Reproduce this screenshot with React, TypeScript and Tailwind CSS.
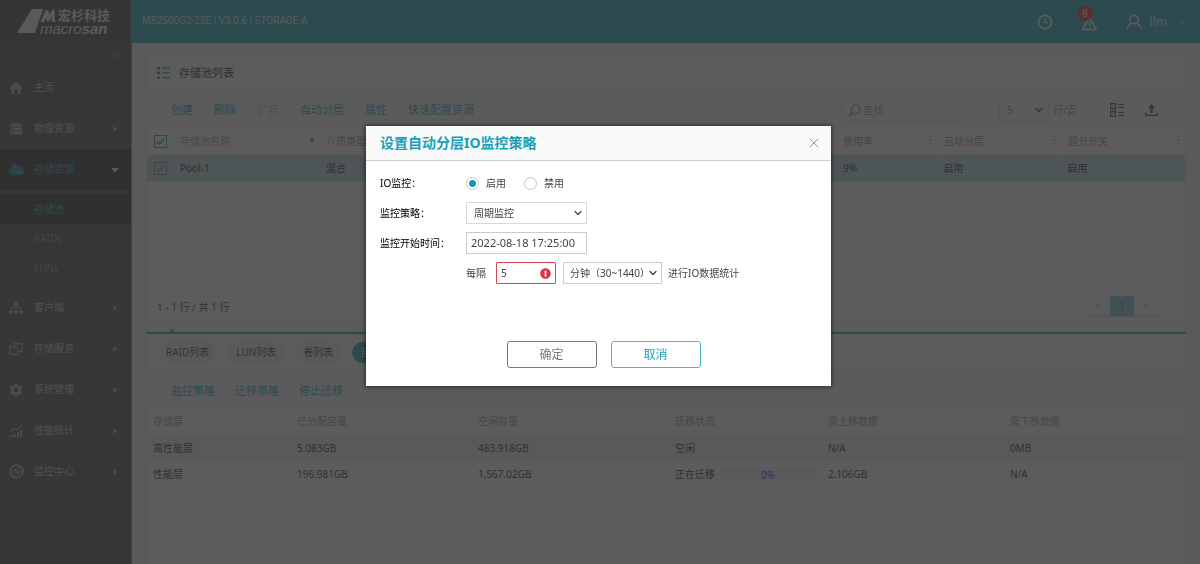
import type { ReactNode } from "react";
import {
  FaCog,
  FaSitemap,
  FaCloud,
  FaExclamationCircle,
} from "react-icons/fa";
import { ChevronDown, ChevronsLeft, X } from "lucide-react";

function Logo() {
  return (
    <div className="flex h-[43px] shrink-0 items-center bg-[#3a3c3e] pl-[17px]">
      <svg width="100" height="34" viewBox="0 -2 100 34" aria-label="宏杉科技 macrosan" role="img">
        <g fill="#f4f4f4">
          <polygon points="0,26 15,2 26,2 18,26" />
          <path d="M25 15 30 4.500 31 13 36 4.500 36.500 15" fill="none" stroke="#f4f4f4" strokeWidth="3.200" strokeLinejoin="round" />
          <text x="41" y="13" fontSize="13" fontWeight="700" fontFamily="Liberation Sans, Noto Sans CJK SC, sans-serif">
            宏杉科技
          </text>
          <text x="23" y="27" fontSize="15" fontStyle="italic" fontFamily="Liberation Sans, sans-serif">
            macro<tspan fontWeight="700">san</tspan>
          </text>
        </g>
      </svg>
    </div>
  );
}

const HomeIcon = (
  <svg width="14" height="14" viewBox="0 0 14 14" fill="currentColor">
    <path d="M7 1 0.8 6.4V8H2v5h3.4V9.4a1.6 1.6 0 0 1 3.2 0V13H12V8h1.2V6.4z" />
  </svg>
);
const StackIcon = (
  <svg width="14" height="14" viewBox="0 0 14 14" fill="currentColor">
    <path d="M1 1.5h12v3H1zM1 5.5h12v3H1zM1 9.5h12v3H1z" />
    <path d="M2 3h2M2 7h2M2 11h2" stroke="#43464a" />
  </svg>
);
const CopyIcon = (
  <svg width="14" height="14" viewBox="0 0 14 14" fill="none" stroke="currentColor" strokeWidth="1.3">
    <path d="M8 9.500h5V1.500H5.500V7.500M8 4.500v3M3.500 4.500H1v8h7.500v-1" />
  </svg>
);
const ChartIcon = (
  <svg width="14" height="14" viewBox="0 0 14 14" fill="currentColor">
    <path d="M1 11h2v2H1zM4.500 9.500h2V13h-2zM8 8h2v5H8zM11.200 6h2v7h-2z" />
    <path d="M1 7.500 5 4.500 8 6l5-4.500" fill="none" stroke="currentColor" strokeWidth="1.200" />
  </svg>
);
const PulseIcon = (
  <svg width="15" height="15" viewBox="0 0 15 15" fill="none" stroke="currentColor">
    <circle cx="7.500" cy="7.500" r="6.300" strokeWidth="1.800" />
    <path d="m3.500 8.500 2.500-3 3 4 2.500-3" strokeWidth="1.500" />
    <path d="m5 10.500 2.500-2.500M7.500 5.500 10 4.500" />
  </svg>
);

function NavItem({ icon, label, arrow = true, active = false }: { icon: ReactNode; label: string; arrow?: boolean; active?: boolean }) {
  return (
    <a
      href="#"
      className={
        active
          ? "flex h-[41px] items-center bg-[#23272b] pl-[9px] pr-3 text-[#14a0bb]"
          : "flex h-[41px] items-center pl-[9px] pr-3 text-[#c3c5c7]"
      }
    >
      <span className="flex w-[25px] items-center opacity-80">{icon}</span>
      <span className="flex-1">{label}</span>
      {arrow && (
        <svg width="8" height="8" viewBox="0 0 8 8" fill={active ? "#f4f4f4" : "#b0b2b4"}>
          {active ? <path d="M0 2h8L4 6.500z" /> : <path d="M2.500 1v6L6 4z" />}
        </svg>
      )}
    </a>
  );
}

function Sidebar() {
  return (
    <aside className="flex w-[132px] shrink-0 flex-col border-r border-[#7f8183] bg-[#43464a]">
      <Logo />
      <div className="flex h-6 items-center justify-end pr-[9px] text-[#85888b]">
        <button type="button" aria-label="收起菜单">
          <ChevronsLeft size={12} />
        </button>
      </div>
      <nav>
        <NavItem icon={HomeIcon} label="主页" arrow={false} />
        <NavItem icon={StackIcon} label="物理资源" />
        <NavItem icon={<FaCloud size={15} />} label="存储资源" active />
        <div className="bg-[#3d4043] py-1">
          <a href="#" className="flex h-[30px] items-center bg-[#23272b] pl-[34px] text-[#14a0bb]">存储池</a>
          <a href="#" className="flex h-[29px] items-center pl-[34px] text-[#8d9093]">RAIDs</a>
          <a href="#" className="flex h-[30px] items-center pl-[34px] text-[#8d9093]">LUNs</a>
        </div>
        <NavItem icon={<FaSitemap size={14} />} label="客户端" />
        <NavItem icon={CopyIcon} label="存储服务" />
        <NavItem icon={<FaCog size={14} />} label="系统管理" />
        <NavItem icon={ChartIcon} label="性能统计" />
        <NavItem icon={PulseIcon} label="监控中心" />
      </nav>
    </aside>
  );
}

function TopBar() {
  return (
    <header className="flex h-[43px] items-center bg-[#14a5bf] pl-[10px] pr-3 text-[#e4f4f7]">
      <div className="flex-1 pb-[3px] font-['Roboto','Noto_Sans_CJK_SC',sans-serif] text-[10px]">MS2500G2-25E | V3.0.6 | STORAGE-A</div>
      <button type="button" aria-label="时间" className="mr-[14px]">
        <svg width="16" height="16" viewBox="0 0 16 16" fill="none" stroke="currentColor">
          <circle cx="8" cy="8" r="6.500" strokeWidth="2" />
          <path d="M8 4.500V8.500h3" strokeWidth="1.500" />
        </svg>
      </button>
      <button type="button" aria-label="告警" className="relative mr-7 flex h-[43px] items-center border-l border-[#0f93ab] pl-[13px]">
        <svg width="17" height="15" viewBox="0 0 17 15" fill="none" stroke="currentColor" strokeWidth="1.800" className="mt-[3px]">
          <path d="M8.500 2 15.500 13.500h-14z" strokeLinejoin="round" />
          <path d="M8.500 6v4M8.500 11v1.200" strokeWidth="1.500" />
        </svg>
        <span className="absolute left-[10px] top-[6px] flex h-[15px] w-[15px] items-center justify-center rounded-full bg-[#f02020] text-[10px]">
          8
        </span>
      </button>
      <button type="button" className="flex items-center">
        <svg width="16" height="15" viewBox="0 0 16 15" fill="none" stroke="currentColor" strokeWidth="1.800" className="mr-2">
          <circle cx="8" cy="5.500" r="4.200" />
          <path d="M1.200 14.500C1.800 11.500 3.500 10 5.500 9M14.800 14.500C14.200 11.500 12.500 10 10.500 9" />
        </svg>
        <span className="mr-[11px] text-xs">llm</span>
        <ChevronDown size={10} strokeWidth={2} className="shrink-0" />
      </button>
    </header>
  );
}

function Sorter() {
  return (
    <svg width="5" height="10" viewBox="0 0 5 10" fill="#c4c4c4" className="shrink-0">
      <path d="M2.500 1 4.500 4h-4zM2.500 9 .5 6h4z" />
    </svg>
  );
}

function HeadCell({ label }: { label: string }) {
  return (
    <th className="pl-[7px] pr-1 font-normal">
      <div className="flex items-center justify-between">
        {label}
        <Sorter />
      </div>
    </th>
  );
}

function Tick({ label, tone }: { label: string; tone: "teal" | "grey" }) {
  return (
    <label className="grid w-[13px] place-items-center">
      <input
        type="checkbox"
        defaultChecked
        aria-label={label}
        className={
          tone === "teal"
            ? "col-start-1 row-start-1 h-[13px] w-[13px] appearance-none border border-[#14a0a0]"
            : "col-start-1 row-start-1 h-[13px] w-[13px] appearance-none border border-[#777]"
        }
      />
      <svg
        width="9"
        height="9"
        viewBox="0 0 9 9"
        fill="none"
        stroke={tone === "teal" ? "#14a0a0" : "#777"}
        strokeWidth="1.500"
        className="pointer-events-none col-start-1 row-start-1"
      >
        <path d="m1 4.500 2.500 2.500L8 2" />
      </svg>
    </label>
  );
}

const toolClass = "text-[#14a0bb]";

function PoolPanel() {
  return (
    <section className="flex h-[267px] flex-col border border-[#eaeaea] border-b-[#b9dfe6] bg-white">
      <h2 className="flex h-[34px] items-center gap-[9px] pl-[10px] text-[11px] font-medium text-[#444]">
        <svg width="13" height="12" viewBox="0 0 13 12" fill="#1590aa">
          <path d="M0 0h3v2.500H0zM0 4.700h3v2.500H0zM0 9.400h3v2.500H0zM5 .5h8v1.300H5zM5 5.200h8v1.300H5zM5 9.900h8v1.300H5z" />
        </svg>
        存储池列表
      </h2>
      <div className="flex h-[38px] items-center bg-[#fbfbfb] pl-6 pr-[27px] pt-0.5 text-[11px]">
        <div className="flex flex-1 gap-[21px]">
          <button type="button" className={toolClass}>创建</button>
          <button type="button" className={toolClass}>删除</button>
          <button type="button" className="text-[#bbb]">扩容</button>
          <button type="button" className={toolClass}>自动分层</button>
          <button type="button" className={toolClass}>属性</button>
          <button type="button" className={toolClass}>快速配置资源</button>
        </div>
        <label className="mr-6 flex h-[22px] w-[135px] items-center gap-[2px] rounded-full border border-[#ddd] px-[7px] text-[#999]">
          <svg width="13" height="13" viewBox="0 0 13 13" fill="none" stroke="#888" strokeWidth="1.300" className="shrink-0">
            <circle cx="7.500" cy="5.500" r="4.300" />
            <path d="M4.300 8.700 1 12" strokeWidth="1.800" />
          </svg>
          <input type="text" placeholder="查找" aria-label="查找" className="w-full min-w-0 text-[10px] placeholder:text-[#888]" />
        </label>
        <div className="mr-1 grid items-center">
          <select aria-label="每页行数" className="col-start-1 row-start-1 h-[22px] w-[50px] appearance-none border border-[#ddd] pl-[7px] text-[10px] text-[#777]">
            <option>5</option>
          </select>
          <ChevronDown size={12} strokeWidth={3} className="pointer-events-none col-start-1 row-start-1 mr-1 justify-self-end text-[#444]" />
        </div>
        <span className="mr-[33px] text-[10px] text-[#777]">行/页</span>
        <button type="button" aria-label="列设置" className="mr-[21px] text-[#444]">
          <svg width="14" height="14" viewBox="0 0 14 14" fill="none" stroke="currentColor">
            <path d="M.5.5h5v5h-5zM.5 8.500h5v5h-5z" strokeWidth="1.300" />
            <path d="M2.500 3h1M2.500 11h1M8 1.500h6M8 4.500h6M8 9.500h6M8 12.500h6" />
          </svg>
        </button>
        <button type="button" aria-label="导出" className="text-[#444]">
          <svg width="13" height="12" viewBox="0 0 13 12" fill="none" stroke="currentColor" strokeWidth="1.300">
            <path d="M.7 8.500v2.800h11.600V8.500" />
            <path d="M6.500 9V4" strokeWidth="2.500" />
            <path d="M6.500 0 3 4.500h7z" fill="currentColor" stroke="none" />
          </svg>
        </button>
      </div>
      <table className="w-full table-fixed text-left">
        <colgroup>
          <col className="w-7" />
          <col className="w-[144px]" />
          <col />
          <col className="w-[101px]" />
          <col className="w-[124px]" />
          <col className="w-[124px]" />
        </colgroup>
        <thead>
          <tr className="h-[27px] text-[#8f8f8f]">
            <th className="pl-[7px]"><Tick label="全选" tone="teal" /></th>
            <th className="pl-[5px] pr-1 font-normal">
              <div className="flex items-center justify-between">
                存储池名称
                <svg width="6" height="8" viewBox="0 0 6 8" fill="#555"><path d="M3 0 5.500 3.500h-5z" /></svg>
              </div>
            </th>
            <th className="pl-[7px] font-normal">介质类型</th>
            <HeadCell label="使用率" />
            <HeadCell label="自动分层" />
            <HeadCell label="超分开关" />
          </tr>
        </thead>
        <tbody>
          <tr className="h-[27px] bg-[#b4dde4] text-[#222]">
            <td className="pl-[7px]"><Tick label="选择 Pool-1" tone="grey" /></td>
            <td className="pl-[5px]">Pool-1</td>
            <td className="pl-[7px]">混合</td>
            <td className="pl-[7px]">9%</td>
            <td className="border-l border-[#c4e5ea] pl-[6px]">启用</td>
            <td className="border-l border-[#c4e5ea] pl-[6px]">启用</td>
          </tr>
        </tbody>
      </table>
      <div className="mt-auto flex h-[27px] items-center justify-between pl-[10px] pr-[26px] text-[#333]">
        <span>1 - 1 行 / 共 1 行</span>
        <div className="mb-1 flex h-[22px] items-stretch border border-[#e6e6e6] border-b-[#ccc] text-[9px] text-[#777]">
          <button type="button" className="w-6">&lt;</button>
          <button type="button" className="w-6 bg-[#7cc8d5] text-[#26808f]">1</button>
          <button type="button" className="w-6">&gt;</button>
        </div>
      </div>
    </section>
  );
}

const pillClass = "h-[21px] rounded-full bg-[#e3f1f4] px-2";

const tiers = [
  ["高性能层", "5.083GB", "483.918GB", "空闲", "N/A", "0MB"],
  ["性能层", "196.981GB", "1,567.02GB", "正在迁移", "2.106GB", "N/A"],
];

function DetailPanel() {
  return (
    <section className="relative mt-[10px] flex-1 border-x border-t-2 border-[#eaeaea] border-t-[#14a0bb] bg-white">
      <span className="absolute -top-[5px] left-[21px] h-0 w-0 border-x-4 border-b-4 border-x-transparent border-b-[#14a0bb]" />
      <div className="flex h-[37px] items-center gap-[11px] border-b border-[#eee] pl-[11px] text-[#333]">
        <button type="button" className={pillClass}>RAID列表</button>
        <button type="button" className={pillClass}>LUN列表</button>
        <button type="button" className={pillClass}>卷列表</button>
        <button type="button" className="h-[21px] rounded-full bg-[#14a0bb] px-2 text-white">自动分层</button>
      </div>
      <div className="flex h-[37px] items-center gap-5 bg-[#fbfbfb] pl-6 pt-[3px] text-[11px]">
        <button type="button" className={toolClass}>监控策略</button>
        <button type="button" className={toolClass}>迁移策略</button>
        <button type="button" className={toolClass}>停止迁移</button>
      </div>
      <table className="w-full table-fixed text-left">
        <colgroup>
          <col className="w-[144px]" />
          <col className="w-[181px]" />
          <col className="w-[197px]" />
          <col className="w-[153px]" />
          <col className="w-[182px]" />
          <col />
        </colgroup>
        <thead>
          <tr className="h-[27px] text-[#8f8f8f]">
            {["存储层", "已分配容量", "空闲容量", "迁移状态", "需上移数据", "需下移数据"].map((h) => (
              <th key={h} className="pl-[6px] font-normal">{h}</th>
            ))}
          </tr>
        </thead>
        <tbody className="text-[#222]">
          {tiers.map((row, r) => (
            <tr key={row[0]} className={r === 0 ? "h-[26px] bg-[#f0f0f0]" : "h-[27px]"}>
              {row.map((cell, i) => (
                <td key={i} className="pl-[6px]">
                  {cell === "正在迁移" ? (
                    <div className="flex items-center gap-[5px]">
                      {cell}
                      <span className="h-[14px] w-24 bg-[#f4f3fa] text-center leading-[14px] text-[#2a14e0]">0%</span>
                    </div>
                  ) : (
                    cell
                  )}
                </td>
              ))}
            </tr>
          ))}
        </tbody>
      </table>
    </section>
  );
}

const radioClass =
  "h-[13px] w-[13px] appearance-none rounded-full border border-[#c4c4c4] bg-white checked:bg-[radial-gradient(circle,#1495ae_3px,#ffffff_4px)]";

function PolicyDialog() {
  return (
    <div
      role="dialog"
      aria-modal="true"
      aria-labelledby="dialog-title"
      className="w-[465px] bg-white text-[#444] shadow-[0_0_4px_1px_rgba(0,0,0,0.5)]"
    >
      <div className="flex h-[35px] items-center justify-between border-b border-[#ccc] bg-[#f8f9f9] pl-[14px] pr-[9px]">
        <h1 id="dialog-title" className="text-sm font-bold text-[#1a9fbb]">设置自动分层IO监控策略</h1>
        <button type="button" aria-label="关闭" className="text-[#999]">
          <X size={16} strokeWidth={1.500} />
        </button>
      </div>
      <form className="flex flex-col gap-2 px-[14px] pb-[18px] pt-[11px]" onSubmit={(e) => e.preventDefault()}>
        <div role="radiogroup" aria-labelledby="monitor-label" className="flex h-[22px] items-center">
          <span id="monitor-label" className="w-[86px] text-black">IO监控：</span>
          <label className="mr-[18px] flex items-center gap-[7px]">
            <input type="radio" name="monitor" defaultChecked className={radioClass} />
            启用
          </label>
          <label className="flex items-center gap-[7px]">
            <input type="radio" name="monitor" className={radioClass} />
            禁用
          </label>
        </div>
        <div className="flex items-center">
          <label htmlFor="policy" className="w-[86px] text-black">监控策略：</label>
          <div className="grid items-center">
            <select id="policy" className="col-start-1 row-start-1 h-[22px] w-[121px] appearance-none border border-[#d9d9d9] bg-white pl-[7px] pr-5">
              <option>周期监控</option>
            </select>
            <ChevronDown size={12} strokeWidth={2.500} className="pointer-events-none col-start-1 row-start-1 mr-[3px] justify-self-end" />
          </div>
        </div>
        <div className="flex items-center">
          <label htmlFor="start" className="w-[86px] text-black">监控开始时间：</label>
          <input id="start" type="text" defaultValue="2022-08-18 17:25:00" className="h-[22px] w-[121px] border border-[#ccc] pb-0.5 pl-1 text-[11px]" />
        </div>
        <div className="flex items-center pl-[86px]">
          <label htmlFor="interval" className="mr-[10px]">每隔</label>
          <div className="mr-[7px] flex h-[22px] w-[60px] items-center rounded-[1px] border border-[#d9454f] px-1">
            <input id="interval" type="text" defaultValue="5" aria-invalid="true" className="w-full min-w-0 outline-none" />
            <FaExclamationCircle size={11} className="shrink-0 text-[#d63a46]" />
          </div>
          <div className="mr-[6px] grid items-center">
            <select aria-label="间隔单位" className="col-start-1 row-start-1 h-[22px] w-[99px] appearance-none border border-[#ccc] bg-white pl-[6px] pr-[18px]">
              <option>分钟（30~1440）</option>
            </select>
            <ChevronDown size={12} strokeWidth={2.500} className="pointer-events-none col-start-1 row-start-1 mr-[3px] justify-self-end" />
          </div>
          <span>进行IO数据统计</span>
        </div>
        <div className="mt-[49px] flex justify-center gap-[14px] pl-[10px] text-xs">
          <button type="submit" className="h-[27px] w-[90px] rounded-[3px] border border-[#777] text-[#777]">确定</button>
          <button type="button" className="h-[27px] w-[90px] rounded-[3px] border border-[#4fb3c8] text-[#1a9fbb]">取消</button>
        </div>
      </form>
    </div>
  );
}

export default function App() {
  return (
    <div className="flex min-h-screen bg-[#f4f4f4] font-['Noto_Sans','Noto_Sans_CJK_SC',sans-serif] text-[10px]">
      <Sidebar />
      <div className="flex min-w-0 flex-1 flex-col">
        <TopBar />
        <main className="flex flex-1 flex-col px-[14px] pt-3">
          <PoolPanel />
          <DetailPanel />
        </main>
      </div>
      <div className="fixed inset-0 flex items-start justify-center bg-[#333333]/80 pr-[3px] pt-[126px]">
        <PolicyDialog />
      </div>
    </div>
  );
}
